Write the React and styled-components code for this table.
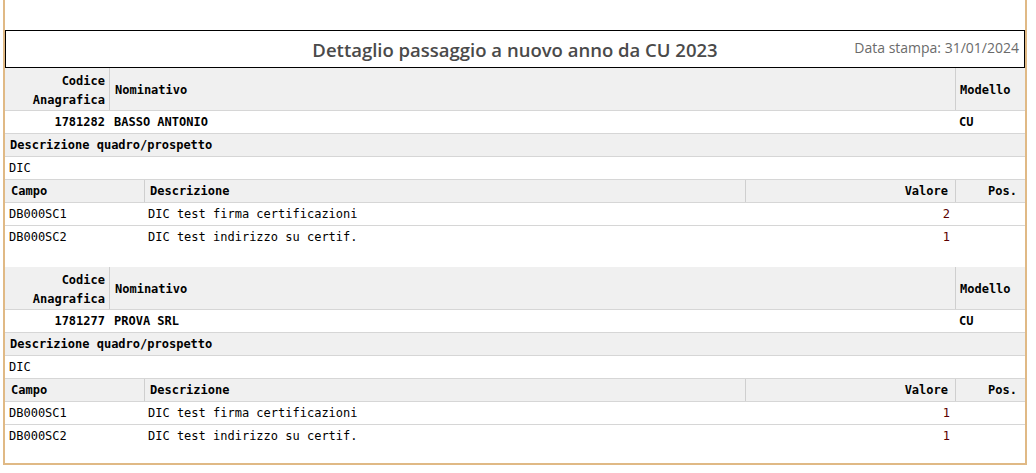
import React from "react";
import styled, { createGlobalStyle } from "styled-components";

const GlobalStyle = createGlobalStyle`
  html, body {
    margin: 0;
    padding: 0;
    background: #ffffff;
  }
  body {
    font-family: "DejaVu Sans Mono", "Liberation Mono", monospace;
    font-size: 12px;
    color: #000;
  }
`;

const blocks = [
  {
    code: "1781282",
    name: "BASSO ANTONIO",
    model: "CU",
    quadro: "DIC",
    rows: [
      { campo: "DB000SC1", desc: "DIC test firma certificazioni", valore: "2", pos: "" },
      { campo: "DB000SC2", desc: "DIC test indirizzo su certif.", valore: "1", pos: "" },
    ],
  },
  {
    code: "1781277",
    name: "PROVA SRL",
    model: "CU",
    quadro: "DIC",
    rows: [
      { campo: "DB000SC1", desc: "DIC test firma certificazioni", valore: "1", pos: "" },
      { campo: "DB000SC2", desc: "DIC test indirizzo su certif.", valore: "1", pos: "" },
    ],
  },
];

const App = () => {
  return (
    <>
      <GlobalStyle />
      <Frame>
        <TitleBox>
          <span />
          <Title>Dettaglio passaggio a nuovo anno da CU 2023</Title>
          <PrintDate>Data stampa: 31/01/2024</PrintDate>
        </TitleBox>

        {blocks.map((block, b) => (
          <Block key={block.code} $last={b === blocks.length - 1}>
            <HeadRow>
              <Cell $align="right" $pad="4px" $bold $line>
                Codice
                <br />
                Anagrafica
              </Cell>
              <Cell $pad="5px" $bold $line>
                Nominativo
              </Cell>
              <Cell $pad="4px" $bold>
                Modello
              </Cell>
            </HeadRow>

            <AnagRow>
              <Cell $align="right" $pad="4px" $bold>
                {block.code}
              </Cell>
              <Cell $pad="4px" $bold>
                {block.name}
              </Cell>
              <Cell $pad="3px" $bold>
                {block.model}
              </Cell>
            </AnagRow>

            <Row $gray>
              <Cell $pad="5px" $bold>
                Descrizione quadro/prospetto
              </Cell>
            </Row>
            <Row>
              <Cell $pad="4px">{block.quadro}</Cell>
            </Row>

            <FieldRow $gray>
              <Cell $pad="6px" $bold $line>
                Campo
              </Cell>
              <Cell $pad="5px" $bold $line>
                Descrizione
              </Cell>
              <Cell $align="right" $pad="7px" $bold $line>
                Valore
              </Cell>
              <Cell $align="right" $pad="7px" $bold>
                Pos.
              </Cell>
            </FieldRow>

            {block.rows.map((r, i) => (
              <FieldRow key={r.campo} $last={i === block.rows.length - 1}>
                <Cell $pad="4px">{r.campo}</Cell>
                <Cell $pad="3px">{r.desc}</Cell>
                <Cell $align="right" $pad="5px" $value>
                  {r.valore}
                </Cell>
                <Cell $align="right" $pad="5px">
                  {r.pos}
                </Cell>
              </FieldRow>
            ))}
          </Block>
        ))}
      </Frame>
    </>
  );
};

const Frame = styled.div`
  width: 1020px;
  margin-left: 3px;
  padding-top: 30px;
  border: 2px solid #e0b985;
  border-top: none;
  background: #fff;
`;

const TitleBox = styled.div`
  height: 36px;
  border: 1px solid #000;
  display: grid;
  grid-template-columns: 1fr auto 1fr;
  align-items: center;
`;

const Title = styled.div`
  font-family: "Open Sans", "Liberation Sans", sans-serif;
  font-size: 18.5px;
  font-weight: 600;
  color: #4a4a4a;
  padding-top: 1px;
`;

const PrintDate = styled.div`
  justify-self: end;
  align-self: start;
  padding-top: 7px;
  padding-right: 5px;
  font-family: "Open Sans", "Liberation Sans", sans-serif;
  font-size: 14px;
  color: #6b6b6b;
`;

const Block = styled.div`
  padding-bottom: ${(p) => (p.$last ? "15px" : "18px")};
`;

const Row = styled.div`
  display: grid;
  grid-template-columns: ${(p) => p.$cols || "1fr"};
  height: 22px;
  background: ${(p) => (p.$gray ? "#f0f0f0" : "#fff")};
  border-bottom: 1px solid ${(p) => (p.$last ? "transparent" : "#d6d6d6")};
`;

const HeadRow = styled(Row)`
  grid-template-columns: 105px 1fr 69px;
  height: 42px;
  background: #f0f0f0;
  line-height: 19px;
  & > div {
    padding-top: 3px;
  }
`;

const AnagRow = styled(Row)`
  grid-template-columns: 105px 1fr 69px;
`;

const FieldRow = styled(Row)`
  grid-template-columns: 140px 1fr 210px 69px;
`;

const Cell = styled.div`
  display: flex;
  align-items: center;
  justify-content: ${(p) => (p.$align === "right" ? "flex-end" : "flex-start")};
  text-align: ${(p) => p.$align || "left"};
  padding: 0 ${(p) => p.$pad || "4px"};
  font-weight: ${(p) => (p.$bold ? "bold" : "normal")};
  color: ${(p) => (p.$value ? "#5c0000" : "#000")};
  border-right: 1px solid ${(p) => (p.$line ? "#cfcfcf" : "transparent")};
  white-space: nowrap;
  overflow: hidden;
`;

export default App;
